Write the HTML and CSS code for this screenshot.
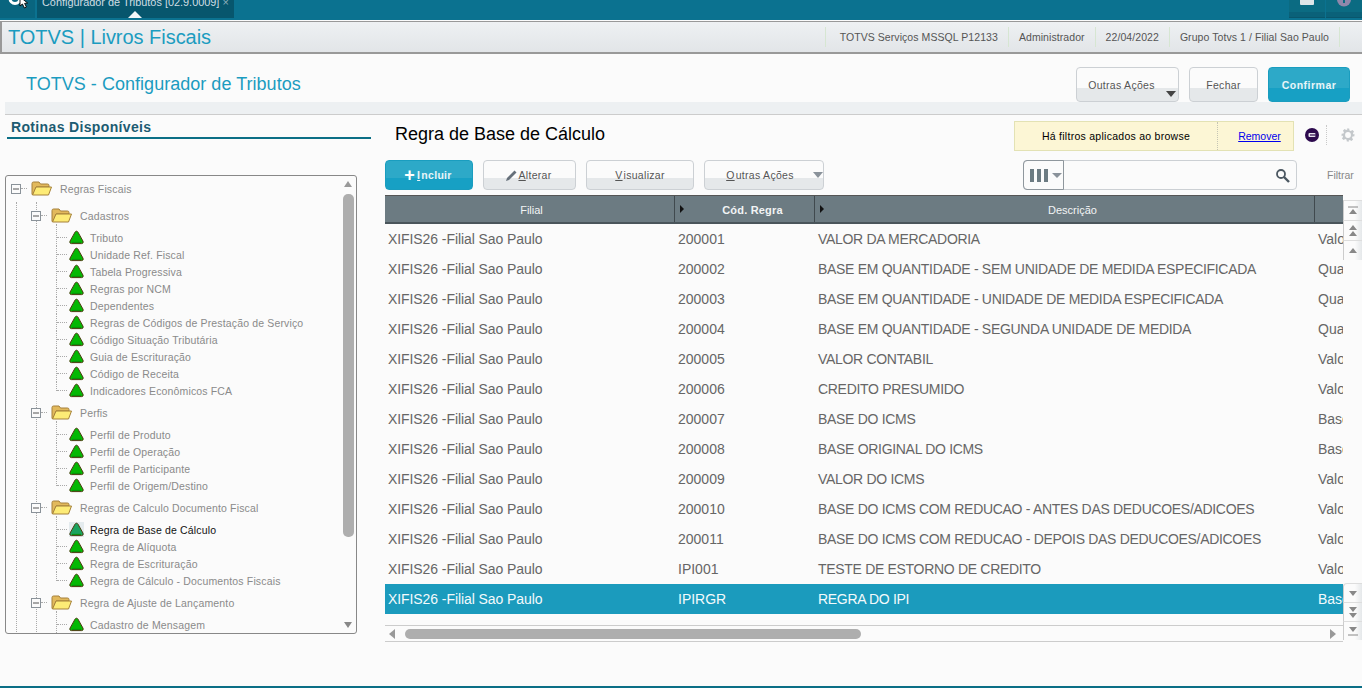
FILE: index.html
```html
<!DOCTYPE html>
<html lang="pt-BR">
<head>
<meta charset="utf-8">
<title>TOTVS | Livros Fiscais</title>
<link rel="stylesheet" href="styles.css">
</head>
<body>
<svg class="defs" width="0" height="0">
  <defs>
    <symbol id="leaf" viewBox="0 0 15 15">
      <path class="leaf-fill" d="M7.5 1.2 Q8.4 1.2 9 2.2 L14 11.2 Q14.8 13.4 12.6 13.6 H2.4 Q.2 13.4 1 11.2 L6 2.2 Q6.6 1.2 7.5 1.2Z" stroke="#4d3a10" stroke-width="1"/>
      <path d="M3 12.4 H12" stroke="#0a8c0a" stroke-width="1"/>
    </symbol>
    <symbol id="folder" viewBox="0 0 21 15">
      <path d="M1 13.5 V2.5 Q1 1 2.5 1 H8 L9.5 3 H16.5 Q18 3 18 4.5 V6 H5 L2.5 13.5Z" fill="#e2b95c" stroke="#a5803a" stroke-width="1"/>
      <path d="M5 6 H20.5 L17.5 14 H1.5Z" fill="#fdeb76" stroke="#a5803a" stroke-width="1"/>
    </symbol>
    <symbol id="minus" viewBox="0 0 10 10">
      <rect x=".5" y=".5" width="9" height="9" fill="#fbfbfb" stroke="#8a9299"/>
      <path d="M2 5 H8" stroke="#555"/>
    </symbol>
  </defs>
</svg>
<div class="page">
  <div class="topbar">
    <div class="logo">
      <svg width="32" height="18" viewBox="0 0 32 18"><circle cx="15" cy="-1.5" r="5" fill="none" stroke="#fff" stroke-width="3"/><path d="M20 -3 L20 6 L22.4 4 L24.5 8 L26.4 7 L24.6 3.4 L27.6 3 Z" fill="#fff" stroke="#000" stroke-width=".9"/></svg>
    </div>
    <div class="tab"><span class="tab-text">Configurador de Tributos [02.9.0009] <span class="tab-x">×</span></span><i class="tab-tip"></i></div>
    <div class="top-spacer"></div>
    <div class="top-btn"><svg width="14" height="6" viewBox="0 0 14 6"><rect x="0" y="-6" width="14" height="11" rx="1" fill="#dfe5e8"/></svg></div>
    <div class="top-btn"><svg width="14" height="7" viewBox="0 0 14 7"><circle cx="7" cy="-.5" r="7" fill="#8f87ab"/><rect x="6" y="-2" width="2" height="5" fill="#0b6b82"/></svg></div>
  </div>

  <div class="appbar">
    <div class="app-title">TOTVS | Livros Fiscais</div>
    <div class="app-info">
      <span>TOTVS Serviços MSSQL P12133</span>
      <span>Administrador</span>
      <span>22/04/2022</span>
      <span>Grupo Totvs 1 / Filial Sao Paulo</span>
    </div>
  </div>

  <div class="titlerow">
    <h1 class="page-title">TOTVS - Configurador de Tributos</h1>
    <div class="title-actions">
      <button class="btn big more">Outras Ações<i class="caret dark"></i></button>
      <button class="btn big close">Fechar</button>
      <button class="btn big primary confirm">Confirmar</button>
    </div>
  </div>
  <div class="strip"></div>

  <div class="main">
    <aside class="side">
      <div class="side-head">Rotinas Disponíveis</div>
      <div class="tree">
        <div class="tree-clip">
          <div class="folder-row root"><svg class="exp"><use href="#minus"/></svg><svg class="fold"><use href="#folder"/></svg><span>Regras Fiscais</span></div>
          <div class="level1">
            <div class="folder-row"><svg class="exp"><use href="#minus"/></svg><svg class="fold"><use href="#folder"/></svg><span>Cadastros</span></div>
            <div class="level2">
              <div class="leaf"><svg class="ico"><use href="#leaf"/></svg><span>Tributo</span></div>
              <div class="leaf"><svg class="ico"><use href="#leaf"/></svg><span>Unidade Ref. Fiscal</span></div>
              <div class="leaf"><svg class="ico"><use href="#leaf"/></svg><span>Tabela Progressiva</span></div>
              <div class="leaf"><svg class="ico"><use href="#leaf"/></svg><span>Regras por NCM</span></div>
              <div class="leaf"><svg class="ico"><use href="#leaf"/></svg><span>Dependentes</span></div>
              <div class="leaf"><svg class="ico"><use href="#leaf"/></svg><span>Regras de Códigos de Prestação de Serviço</span></div>
              <div class="leaf"><svg class="ico"><use href="#leaf"/></svg><span>Código Situação Tributária</span></div>
              <div class="leaf"><svg class="ico"><use href="#leaf"/></svg><span>Guia de Escrituração</span></div>
              <div class="leaf"><svg class="ico"><use href="#leaf"/></svg><span>Código de Receita</span></div>
              <div class="leaf"><svg class="ico"><use href="#leaf"/></svg><span>Indicadores Econômicos FCA</span></div>
            </div>
            <div class="folder-row"><svg class="exp"><use href="#minus"/></svg><svg class="fold"><use href="#folder"/></svg><span>Perfis</span></div>
            <div class="level2">
              <div class="leaf"><svg class="ico"><use href="#leaf"/></svg><span>Perfil de Produto</span></div>
              <div class="leaf"><svg class="ico"><use href="#leaf"/></svg><span>Perfil de Operação</span></div>
              <div class="leaf"><svg class="ico"><use href="#leaf"/></svg><span>Perfil de Participante</span></div>
              <div class="leaf"><svg class="ico"><use href="#leaf"/></svg><span>Perfil de Origem/Destino</span></div>
            </div>
            <div class="folder-row"><svg class="exp"><use href="#minus"/></svg><svg class="fold"><use href="#folder"/></svg><span>Regras de Calculo Documento Fiscal</span></div>
            <div class="level2">
              <div class="leaf active"><svg class="ico"><use href="#leaf"/></svg><span>Regra de Base de Cálculo</span></div>
              <div class="leaf"><svg class="ico"><use href="#leaf"/></svg><span>Regra de Alíquota</span></div>
              <div class="leaf"><svg class="ico"><use href="#leaf"/></svg><span>Regra de Escrituração</span></div>
              <div class="leaf"><svg class="ico"><use href="#leaf"/></svg><span>Regra de Cálculo - Documentos Fiscais</span></div>
            </div>
            <div class="folder-row"><svg class="exp"><use href="#minus"/></svg><svg class="fold"><use href="#folder"/></svg><span>Regra de Ajuste de Lançamento</span></div>
            <div class="level2">
              <div class="leaf"><svg class="ico"><use href="#leaf"/></svg><span>Cadastro de Mensagem</span></div>
              <div class="leaf"></div>
            </div>
          </div>
        </div>
        <i class="tree-up"></i>
        <div class="tree-thumb"></div>
        <i class="tree-down"></i>
      </div>
    </aside>

    <section class="content">
      <div class="content-head">
        <h2 class="content-title">Regra de Base de Cálculo</h2>
        <div class="notice">
          <span class="notice-text">Há filtros aplicados ao browse</span>
          <a class="notice-link" href="#">Remover</a>
        </div>
        <svg class="filter-dot" width="14" height="14" viewBox="0 0 14 14"><circle cx="7" cy="7" r="7" fill="#2d0a4e"/><rect x="3.5" y="5" width="7" height="4" rx="1" fill="#e7e3ee"/><rect x="5" y="6.4" width="6" height="1.2" fill="#2d0a4e"/></svg>
        <i class="sep"></i>
        <svg class="gear" width="14" height="14" viewBox="0 0 24 24"><path d="M10 1h4l.6 3.2 2.2.9 2.7-1.8 2.8 2.8-1.8 2.7.9 2.2L23 10v4l-3.2.6-.9 2.2 1.8 2.7-2.8 2.8-2.7-1.8-2.2.9L14 23h-4l-.6-3.2-2.2-.9-2.7 1.8-2.8-2.8 1.8-2.7-.9-2.2L1 14v-4l3.2-.6.9-2.2-1.8-2.7 2.8-2.8 2.7 1.8 2.2-.9Z" fill="#c4c8cb"/><circle cx="12" cy="12" r="5" fill="#fbfbfb"/></svg>
      </div>

      <div class="toolbar">
        <button class="btn primary incl"><span class="plus">+</span><u>I</u>ncluir</button>
        <button class="btn alt"><svg width="13" height="13" viewBox="0 0 13 13"><path d="M1 12 L2 9 L9.5 1.5 L11.5 3.5 L4 11 Z" fill="#66707a"/></svg><u>A</u>lterar</button>
        <button class="btn vis"><u>V</u>isualizar</button>
        <button class="btn act"><u>O</u>utras Ações<i class="caret"></i></button>
        <div class="search">
          <div class="cols"><i></i><i></i><i></i><b class="caret small"></b></div>
          <div class="search-input"></div>
          <svg width="15" height="15" viewBox="0 0 15 15"><circle cx="6" cy="6" r="4" fill="none" stroke="#4c5862" stroke-width="1.8"/><path d="M9 9 L14 14" stroke="#4c5862" stroke-width="2.4"/></svg>
        </div>
        <div class="filtrar">Filtrar</div>
      </div>

      <div class="browse-wrap">
        <div class="browse">
          <div class="g-row g-head">
            <div>Filial</div>
            <div class="h-b"><i class="mark"></i>Cód. Regra</div>
            <div><i class="mark"></i>Descrição</div>
            <div></div>
          </div>
          <div class="g-row"><div>XIFIS26 -Filial Sao Paulo</div><div>200001</div><div>VALOR DA MERCADORIA</div><div>Valor</div></div>
          <div class="g-row"><div>XIFIS26 -Filial Sao Paulo</div><div>200002</div><div>BASE EM QUANTIDADE - SEM UNIDADE DE MEDIDA ESPECIFICADA</div><div>Quantidade</div></div>
          <div class="g-row"><div>XIFIS26 -Filial Sao Paulo</div><div>200003</div><div>BASE EM QUANTIDADE - UNIDADE DE MEDIDA ESPECIFICADA</div><div>Quantidade</div></div>
          <div class="g-row"><div>XIFIS26 -Filial Sao Paulo</div><div>200004</div><div>BASE EM QUANTIDADE - SEGUNDA UNIDADE DE MEDIDA</div><div>Quantidade</div></div>
          <div class="g-row"><div>XIFIS26 -Filial Sao Paulo</div><div>200005</div><div>VALOR CONTABIL</div><div>Valor</div></div>
          <div class="g-row"><div>XIFIS26 -Filial Sao Paulo</div><div>200006</div><div>CREDITO PRESUMIDO</div><div>Valor</div></div>
          <div class="g-row"><div>XIFIS26 -Filial Sao Paulo</div><div>200007</div><div>BASE DO ICMS</div><div>Base</div></div>
          <div class="g-row"><div>XIFIS26 -Filial Sao Paulo</div><div>200008</div><div>BASE ORIGINAL DO ICMS</div><div>Base</div></div>
          <div class="g-row"><div>XIFIS26 -Filial Sao Paulo</div><div>200009</div><div>VALOR DO ICMS</div><div>Valor</div></div>
          <div class="g-row"><div>XIFIS26 -Filial Sao Paulo</div><div>200010</div><div>BASE DO ICMS COM REDUCAO - ANTES DAS DEDUCOES/ADICOES</div><div>Valor</div></div>
          <div class="g-row"><div>XIFIS26 -Filial Sao Paulo</div><div>200011</div><div>BASE DO ICMS COM REDUCAO - DEPOIS DAS DEDUCOES/ADICOES</div><div>Valor</div></div>
          <div class="g-row"><div>XIFIS26 -Filial Sao Paulo</div><div>IPI001</div><div>TESTE DE ESTORNO DE CREDITO</div><div>Valor</div></div>
          <div class="g-row selected"><div>XIFIS26 -Filial Sao Paulo</div><div>IPIRGR</div><div>REGRA DO IPI</div><div>Base</div></div>
          <div class="hscroll">
            <i class="arrow-left"></i>
            <div class="h-thumb"></div>
            <i class="arrow-right"></i>
          </div>
        </div>
        <div class="vscroll">
          <div class="v-group">
            <div class="v-btn"><svg width="12" height="10" viewBox="0 0 12 10"><path d="M1 1H11" stroke="#888"/><path d="M6 3 L10 8 H2Z" fill="#888"/></svg></div>
            <div class="v-btn"><svg width="12" height="12" viewBox="0 0 12 12"><path d="M6 0 L10 5 H2Z M6 6 L10 11 H2Z" fill="#888"/></svg></div>
            <div class="v-btn"><svg width="12" height="8" viewBox="0 0 12 8"><path d="M6 1 L10 6 H2Z" fill="#888"/></svg></div>
          </div>
          <div class="v-group bottom">
            <div class="v-btn"><svg width="12" height="8" viewBox="0 0 12 8"><path d="M6 7 L10 2 H2Z" fill="#888"/></svg></div>
            <div class="v-btn"><svg width="12" height="12" viewBox="0 0 12 12"><path d="M6 6 L10 1 H2Z M6 12 L10 7 H2Z" fill="#888"/></svg></div>
            <div class="v-btn"><svg width="12" height="10" viewBox="0 0 12 10"><path d="M6 6 L10 1 H2Z" fill="#888"/><path d="M1 9H11" stroke="#888"/></svg></div>
          </div>
        </div>
      </div>
    </section>
  </div>
  <div class="bottomline"></div>
</div>
</body>
</html>
```

FILE: styles.css
```css
* { box-sizing: border-box; }
html, body { margin: 0; padding: 0; height: 100%; }
body { background: #fbfbfb; font-family: "Liberation Sans", Arial, sans-serif; overflow: hidden; }
.defs { position: absolute; }
.page { width: 1362px; height: 688px; display: flex; flex-direction: column; overflow: hidden; }

/* top bar */
.topbar { height: 20px; flex: none; background: #0b7290; display: flex; align-items: flex-start; gap: 2px; overflow: hidden; }
.logo { width: 35px; height: 18px; background: #09657f; }
.logo svg { display: block; }
.tab { position: relative; width: 197px; height: 18px; background: #07566d; color: #cfdde3; font-size: 10.9px; padding-left: 5px; overflow: hidden; white-space: nowrap; }
.tab-text { display: block; line-height: 4px; }
.tab-x { color: #8fb0bc; }
.tab-tip { position: absolute; left: 91px; bottom: 0; border: 7px solid transparent; border-top: 0; border-bottom-color: #f4f6f7; }
.top-spacer { flex: 1; }
.top-btn { width: 36px; height: 18px; background: #0b6b82; border-bottom: 1px solid #09566c; box-shadow: inset 0 -5px 0 #0a6179; display: flex; justify-content: center; }
.top-btn + .top-btn { margin-left: -1px; }
.top-btn svg { display: block; }

/* app bar */
.appbar { height: 33px; margin: 1px 0 0; flex: none; border: 1px solid #999; border-left-width: 2px; border-right: 0; border-bottom-width: 2px; background: linear-gradient(#eef1f3, #e2e5e8); display: flex; align-items: center; justify-content: space-between; padding: 0 22px 0 6px; }
.app-title { font-size: 20px; letter-spacing: -.03px; color: #1b9cc0; }
.app-info { display: flex; font-size: 10.5px; letter-spacing: .07px; color: #555; }
.app-info span { padding: 0 10px; line-height: 20px; border-right: 1px solid #d6e6d2; }
.app-info span:first-child { border-left: 1px solid #d6e6d2; padding-left: 14px; }

/* title row */
.titlerow { height: 48px; flex: none; display: flex; justify-content: space-between; padding: 13px 12px 0 26px; }
.page-title { margin: 7px 0 0; font-size: 18px; letter-spacing: .03px; font-weight: normal; color: #1b9cc0; }
.title-actions { display: flex; gap: 10px; }
.strip { height: 13px; flex: none; margin-left: 5px; background: #edf0f2; border-bottom: 1px solid #ccc; }

/* buttons */
.btn { position: relative; flex: none; height: 30px; border: 1px solid #ccd0d4; border-radius: 4px; background: linear-gradient(#fbfbfb 62%, #e5e8ea 62%); color: #555; font: 10.5px "Liberation Sans", Arial, sans-serif; letter-spacing: .3px; padding: 0; display: flex; align-items: center; justify-content: center; gap: 1px; }
.btn.big { height: 35px; }
.more { width: 103px; padding-right: 12px; }
.close { width: 69px; }
.confirm { width: 82px; letter-spacing: .5px; }
.primary { background: linear-gradient(#2da9c8 62%, #17a0c4 62%); border-color: #1a9dbf; color: #e8f5f8; font-weight: bold; }
.caret { position: absolute; right: 2px; top: 23px; border: 5px solid transparent; border-bottom: 0; border-top: 6px solid #8a929a; }
.caret.dark { border-top-color: #444; }
.btn.act .caret { top: 11px; right: 0; }

/* layout */
.main { flex: 1; display: flex; min-height: 0; }
.side { width: 380px; margin-left: 5px; flex: none; }
.side-head { width: 364px; margin-left: 2px; height: 24px; padding: 4px 0 0 4px; border-bottom: 2px solid #0b6f86; font-size: 14px; font-weight: bold; color: #1d5c72; letter-spacing: .35px; }

/* tree */
.tree { position: relative; width: 352px; height: 459px; margin-top: 36px; border: 1px solid #888; border-radius: 3px; }
.tree-clip { height: 100%; overflow: hidden; padding: 0 0 0 5px; font-size: 10.5px; letter-spacing: .15px; color: #8a8a8a; }
.tree-clip span { white-space: nowrap; }
.leaf-fill { fill: var(--leaf, #04b804); }
.folder-row { height: 27px; display: flex; align-items: center; position: relative; }
.folder-row::before { content: ""; position: absolute; left: 10px; width: 6px; top: 13px; border-top: 1px dotted #aaa; }
.folder-row.root { margin-top: -1px; }
.exp { width: 10px; height: 10px; flex: none; position: relative; z-index: 1; }
.fold { width: 21px; height: 15px; flex: none; margin-left: 10px; }
.folder-row span { margin-left: 8px; }
.level1 { position: relative; margin-left: 5px; padding-left: 14px; border-left: 1px dotted #aaa; }
.level1::before { content: ""; position: absolute; left: 19px; top: 0; bottom: 0; border-left: 1px dotted #aaa; }
.level2 { margin-left: 25px; padding-left: 13px; }
.leaf { height: 17px; display: flex; align-items: center; position: relative; }
.leaf::before { content: ""; position: absolute; left: -12px; width: 10px; top: 8px; border-top: 1px dotted #aaa; }
.leaf::after { content: ""; position: absolute; left: -13px; top: 0; bottom: 0; border-left: 1px dotted #aaa; }
.leaf:first-child::after { top: -5px; }
.leaf:last-child::after { bottom: 8px; }
.ico { width: 15px; height: 15px; flex: none; }
.leaf span { margin-left: 6px; }
.leaf.active { color: #111; --leaf: #1aa35f; }
.leaf.active .ico { background: #e4ebee; }
.tree-thumb { position: absolute; right: 2px; top: 18px; width: 11px; height: 343px; background: #aeaeae; border-radius: 5px; }
.tree-up { position: absolute; right: 4px; top: 5px; border: 4px solid transparent; border-top: 0; border-bottom: 6px solid #999; }
.tree-down { position: absolute; right: 4px; bottom: 5px; border: 4px solid transparent; border-bottom: 0; border-top: 6px solid #888; }

/* content */
.content { flex: 1; min-width: 0; }
.content-head { height: 45px; display: flex; align-items: flex-start; padding-left: 10px; }
.content-title { margin: 9px 0 0; font-size: 18px; font-weight: normal; color: #000; width: 619px; flex: none; }
.notice { width: 280px; height: 30px; margin-top: 6px; flex: none; display: flex; align-items: center; background: #fcf6d5; border: 1px solid #e3e2b4; font-size: 10.5px; letter-spacing: .27px; }
.notice-text { width: 203px; height: 100%; line-height: 28px; text-align: center; color: #000; border-right: 1px dotted #c5c5b5; }
.notice-link { flex: 1; text-align: center; color: #0000ee; padding-left: 8px; letter-spacing: 0; }
.filter-dot { margin: 13px 0 0 11px; flex: none; }
.sep { width: 1px; height: 20px; flex: none; margin: 10px 0 0 7px; border-left: 1px dotted #c9c9c9; }
.gear { margin: 13px 0 0 14px; flex: none; }

.toolbar { height: 30px; display: flex; align-items: center; gap: 10px; }
.incl { width: 88px; padding-right: 2px; }
.plus { font-size: 18px; line-height: 12px; font-weight: bold; color: #fff; margin-right: 1px; }
.alt { width: 93px; gap: 0; padding-right: 2px; }
.vis { width: 108px; }
.act { width: 120px; padding-right: 8px; }
.search { width: 274px; height: 30px; flex: none; margin-left: 189px; border: 1px solid #ccd0d4; border-radius: 4px; display: flex; align-items: center; padding-right: 6px; background: #fbfbfb; }
.cols { position: relative; flex: none; width: 41px; height: 30px; margin-left: -1px; border: 1px solid #8f979d; border-radius: 4px 0 0 4px; display: flex; gap: 3px; align-items: center; padding-left: 6px; }
.cols i { width: 4px; height: 13px; background: #6c7b82; }
.caret.small { top: 12px; right: 1px; border-width: 5px; border-bottom: 0; }
.search-input { flex: 1; }
.filtrar { margin-left: 20px; flex: none; font-size: 10.5px; color: #888; }

.browse-wrap { display: flex; margin-top: 5px; }
.browse { width: 958px; flex: none; overflow: hidden; }
.g-row { display: grid; grid-template-columns: 290px 140px 500px 60px; height: 30px; font-size: 14px; color: #666; line-height: 30px; white-space: nowrap; }
.g-row > div { padding-left: 3px; overflow: hidden; }
.g-row > div:first-child { letter-spacing: -.08px; }
.g-row > div:nth-child(3) { letter-spacing: -.31px; }
.g-head { height: 29px; line-height: 28px; background: #6c7b82; border-top: 1px solid #555; border-bottom: 2px solid #4a555b; color: #f2f4f5; text-align: center; }
.g-row.g-head > div { position: relative; font-size: 11px; letter-spacing: 0; padding: 0 0 0 4px; border-right: 1px solid #40494e; height: 26px; }
.g-row.g-head > div:nth-child(2), .g-row.g-head > div:nth-child(3) { padding-left: 16px; }
.g-row.g-head > .h-b { font-weight: bold; letter-spacing: .2px; }
.mark { position: absolute; left: 5px; top: 9px; border: 4px solid transparent; border-left: 4px solid #111; border-right: 0; }
.selected { background: #1b9bbd; color: #f3fafc; }
.hscroll { position: relative; height: 17px; margin-top: 11px; border-top: 1px solid #ccc; border-bottom: 1px solid #ccc; }
.h-thumb { position: absolute; left: 20px; top: 3px; width: 456px; height: 10px; background: #aeaeae; border-radius: 5px; }
.arrow-left { position: absolute; left: 4px; top: 3px; border: 5px solid transparent; border-left: 0; border-right: 6px solid #999; }
.arrow-right { position: absolute; right: 7px; top: 3px; border: 5px solid transparent; border-right: 0; border-left: 6px solid #999; }
.vscroll { width: 19px; flex: none; display: flex; flex-direction: column; justify-content: space-between; padding-top: 5px; height: 445px; }
.v-btn { height: 20px; display: flex; align-items: center; justify-content: center; border-left: 1px solid #ccc; border-top: 1px solid #ddd; background: linear-gradient(90deg, #fbfbfb 60%, #e5e8ea); }
.bottom .v-btn { height: 19px; }
.bottom .v-btn:first-child { border-top-left-radius: 4px; }
.bottomline { height: 2px; flex: none; background: #0b6f86; }
```
